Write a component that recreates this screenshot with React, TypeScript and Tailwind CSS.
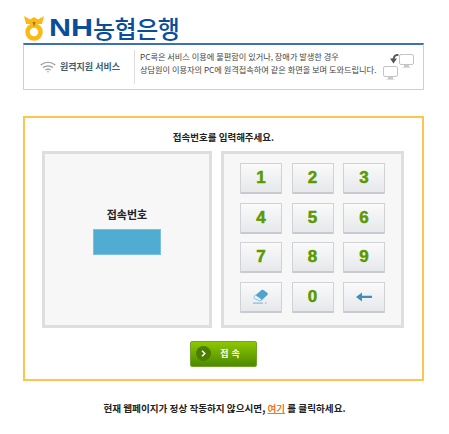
import React from "react";

const KEYS = ["1", "2", "3", "4", "5", "6", "7", "8", "9", "erase", "0", "back"];

const Logo = () => (
  <svg width="22" height="25" viewBox="0 0 22 25" className="shrink-0">
    <path d="M1 0 L7 3.5 L11 1 L15 3.5 L21 0 L19 8 L15 8 L11 11 L7 8 L3 8 Z" fill="#fdb913" />
    <circle cx="11" cy="16" r="6.5" fill="none" stroke="#fdb913" strokeWidth="4.5" />
    <path d="M9.5 6 L11 11 L12.5 6 Z" fill="#9a7a18" />
  </svg>
);

const WifiIcon = () => (
  <svg width="16" height="12" viewBox="0 0 16 12" fill="none" stroke="#9a9a9a" strokeWidth="1.2">
    <path d="M0.7 4 Q8 -1.5 15.3 4" />
    <path d="M3 6.6 Q8 3 13 6.6" />
    <path d="M5.4 9 Q8 7.2 10.6 9" />
    <circle cx="8" cy="10.8" r="0.8" fill="#9a9a9a" stroke="none" />
  </svg>
);

const Monitor = () => (
  <svg width="15" height="15" viewBox="0 0 15 15">
    <rect x="0.5" y="0.5" width="14" height="10" rx="1.5" fill="#fff" stroke="#c4c4c4" />
    <rect x="5" y="11" width="5" height="2" fill="#c8c8c8" />
    <rect x="3.5" y="13" width="8" height="1" fill="#dcdcdc" />
  </svg>
);

const ArrowIcon = () => (
  <svg width="12" height="10" viewBox="0 0 12 10" fill="none">
    <path d="M10.5 0.8 Q6 0.8 5.5 5" stroke="#555" strokeWidth="1.8" />
    <path d="M2 4.5 H9 L5.5 9.5 Z" fill="#555" />
  </svg>
);

const EraserIcon = () => (
  <svg width="18" height="16" viewBox="0 0 18 16">
    <path d="M2 7.5 L9.5 1 Q10.5 0.3 11.5 1 L15.5 4 Q16.3 4.8 15.6 5.8 L10 11 Q8.5 12.3 7 11.5 L2.6 9.6 Q1.2 8.6 2 7.5 Z" fill="#4fa3cf" />
    <path d="M2 7.5 L3.6 6 L9.5 10.2 L8.6 12 Q7.8 12.2 7 11.5 L2.6 9.6 Q1.2 8.6 2 7.5 Z" fill="#e8f2f8" stroke="#4fa3cf" strokeWidth="0.5" />
    <path d="M1 14.2 H11 M13 14.2 H14.5" stroke="#8fbdd6" strokeWidth="1.2" />
  </svg>
);

const BackIcon = () => (
  <svg width="16" height="10" viewBox="0 0 16 10">
    <path d="M0 5 L6 0.5 V3.8 H16 V6 H6 V9.5 Z" fill="#3f8fbd" />
  </svg>
);

const KeyButton = ({ value }: { value: string }) => (
  <button className="h-[31px] w-[42px] rounded-[1px] border border-[#d0d2d6] border-b-2 border-b-[#c8cad0] bg-gradient-to-b from-[#fafafa] to-[#e6e8eb] flex items-center justify-center text-[#5a9a00] text-[17px] font-bold [-webkit-text-stroke:0.5px_#5a9a00] [font-family:'Liberation_Sans',sans-serif]">
    {value === "erase" ? <EraserIcon /> : value === "back" ? <BackIcon /> : value}
  </button>
);

export default function App() {
  return (
    <div className="w-[449px] h-[434px] bg-white overflow-hidden px-[23px] pt-[14px] text-[#222] [font-family:'Noto_Sans_CJK_KR',sans-serif]">
      {/* LOGO */}
      <div className="h-[28px] flex items-center gap-[4px]">
        <Logo />
        <div className="flex items-center text-[#0a4e9b] leading-none">
          <span className="text-[24px] font-bold scale-x-[1.27] origin-left w-[44px] [font-family:'Liberation_Sans',sans-serif]">NH</span>
          <span className="text-[24px] font-medium tracking-[-0.5px] whitespace-nowrap">농협은행</span>
        </div>
      </div>

      {/* SERVICE INFO */}
      <div className="mt-[1px] h-[47px] w-[401px] border border-[#cfcfcf] border-t-2 border-t-[#3f70b5] flex items-center">
        <div className="w-[110px] shrink-0 flex items-center pl-[16px] gap-[4px]">
          <WifiIcon />
          <span className="text-[9px] font-bold text-[#3d5a6e] whitespace-nowrap">원격지원 서비스</span>
        </div>
        <div className="h-[34px] border-l border-[#dddddd] pl-[5px] text-[8.2px] leading-[13px] text-[#444] whitespace-nowrap">
          <p>PC콕은 서비스 이용에 불편함이 있거나, 장애가 발생한 경우</p>
          <p>상담원이 이용자의 PC에 원격접속하여 같은 화면을 보며 도와드립니다.</p>
        </div>
        <div className="relative ml-auto w-[31px] h-[27px] mr-[9px]">
          <div className="absolute right-0 top-0"><Monitor /></div>
          <div className="absolute left-0 bottom-0"><Monitor /></div>
          <div className="absolute left-[5px] top-0"><ArrowIcon /></div>
        </div>
      </div>

      {/* CONNECT BOX */}
      <div className="mt-[26px] h-[265px] w-[401px] border-2 border-[#fdc44f] px-[17px] pt-[12px]">
        <p className="text-center text-[9.5px] font-bold leading-[15px] text-[#222]">접속번호를 입력해주세요.</p>
        <div className="mt-[6px] flex gap-[9px]">
          <div className="h-[177px] w-[170px] border-[3px] border-[#dedede] bg-[#f7f7f7] flex flex-col items-center pt-[52px]">
            <span className="text-[11px] font-bold leading-[16px] text-[#222]">접속번호</span>
            <div className="mt-[7px] h-[26px] w-[68px] bg-[#50acd0] border border-[#7cc0dc]" />
          </div>
          <div className="h-[177px] w-[183px] border-[3px] border-[#dedede] bg-[#f7f7f7] pl-[16px] pt-[9px]">
            <div className="grid grid-cols-[42px_42px_42px] gap-x-[9.5px] gap-y-[8.5px]">
              {KEYS.map((k) => (
                <KeyButton key={k} value={k} />
              ))}
            </div>
          </div>
        </div>
        <div className="mt-[13px] flex justify-center">
          <button className="relative h-[26px] w-[67px] rounded-[2px] border border-[#74a32c] bg-gradient-to-b from-[#8ec800] to-[#4c8a00] flex items-center justify-center pl-[16px] text-white text-[9px] font-bold tracking-[3px]">
            <span className="absolute left-[5px] top-[4px] w-[15px] h-[15px] rounded-full bg-[#4a7d00] flex items-center justify-center">
              <svg width="5" height="7" viewBox="0 0 5 7" fill="none" stroke="#fff" strokeWidth="1.5">
                <path d="M1 0.8 L3.8 3.5 L1 6.2" />
              </svg>
            </span>
            접속
          </button>
        </div>
      </div>

      {/* FOOTER */}
      <p className="mt-[20px] text-center text-[9.6px] font-bold leading-[15px] text-[#222] whitespace-nowrap">
        현재 웹페이지가 정상 작동하지 않으시면, <a className="text-[#f0762a] underline">여기</a> 를 클릭하세요.
      </p>
    </div>
  );
}
